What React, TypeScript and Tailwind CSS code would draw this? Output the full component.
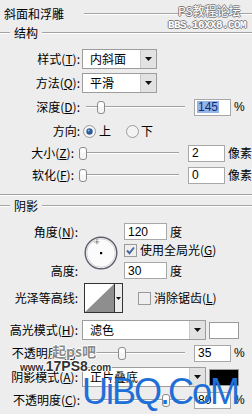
import React from "react";

const K = ({ k }: { k: string }) => <span className="underline underline-offset-[1px]">{k}</span>;

function Etch({ className = "" }: { className?: string }) {
  return <div className={`h-[2px] border-t border-[#a3a3a3] border-b border-b-white ${className}`} />;
}

function Tri() {
  return (
    <svg width="7" height="4" viewBox="0 0 7 4">
      <path d="M0 0 H7 L3.5 4 Z" fill="#111" />
    </svg>
  );
}

function Select({ value, wide }: { value: string; wide?: boolean }) {
  return (
    <div
      className={`flex h-[20px] border border-[#9d9d9d] bg-white ${wide ? "w-[124px]" : "w-[75px]"}`}
    >
      <div className="flex-1 pl-[7px] flex items-center leading-none">{value}</div>
      <div className="w-[16px] bg-[#e2e2e2] border-l border-[#c9c9c9] flex items-center justify-center">
        <Tri />
      </div>
    </div>
  );
}

function Slider({ pos }: { pos: number }) {
  return (
    <div className="relative w-[99px] h-[14px] ml-[6px] shrink-0">
      <div className="absolute left-0 right-0 top-[6px] h-[2px] border-t border-[#a0a0a0] border-b border-b-white" />
      <svg
        className="absolute top-[1px]"
        style={{ left: pos }}
        width="8"
        height="13"
        viewBox="0 0 8 13"
      >
        <rect x="0.5" y="0.5" width="7" height="12" rx="2.5" fill="#f5f5f5" stroke="#8c8c8c" />
        <rect x="1.5" y="1.5" width="5" height="4" rx="1.5" fill="#fff" />
      </svg>
    </div>
  );
}

function Field({ v, sel, w = "w-[37px]" }: { v: string; sel?: boolean; w?: string }) {
  return (
    <div className={`${w} h-[17px] shrink-0 border border-[#a8a8a8] bg-white pl-[3px] flex items-center leading-none font-['Liberation_Sans',sans-serif] text-[12px]`}>
      {sel ? <span className="bg-[#95b4e8] text-[#0c2d76] px-[1px] -ml-[1px]">{v}</span> : v}
    </div>
  );
}

function Radio({ on }: { on?: boolean }) {
  return (
    <svg width="13" height="13" viewBox="0 0 13 13" className="shrink-0">
      <circle cx="6.5" cy="6.5" r="6" fill="#f3f3f3" stroke="#9b9b9b" />
      {on && (
        <>
          <circle cx="6.5" cy="6.5" r="4" fill="#fff" />
          <circle cx="6.5" cy="6.5" r="3.2" fill="#2a5b98" />
          <circle cx="5.7" cy="5.6" r="1.1" fill="#8fb3e0" />
        </>
      )}
    </svg>
  );
}

function Check({ on }: { on?: boolean }) {
  return (
    <svg width="13" height="13" viewBox="0 0 13 13" className="shrink-0">
      <rect x="0.5" y="0.5" width="12" height="12" fill="#efefef" stroke="#9a9a9a" />
      {on && <path d="M3 6.5 L5.5 9.2 L10 3.5" stroke="#4b68a0" strokeWidth="2" fill="none" />}
    </svg>
  );
}

function Dial() {
  return (
    <svg width="34" height="34" viewBox="0 0 34 34">
      <circle cx="17" cy="17" r="15.8" fill="#f2f2f2" stroke="#5d5f6e" strokeWidth="1.4" />
      <circle cx="17" cy="17" r="14.2" fill="#fbfbfb" stroke="#d6d6d6" strokeWidth="1" />
      <rect x="16" y="16" width="2.2" height="2.2" fill="#000" />
      <path d="M13 3.5 V8.5 M10.5 6 H15.5" stroke="#333" strokeWidth="0.8" strokeDasharray="1 0.6" />
    </svg>
  );
}

function Contour() {
  return (
    <div className="flex w-[39px] h-[30px] border border-[#333] bg-white">
      <svg width="29" height="28" viewBox="0 0 29 28" className="shrink-0">
        <rect width="29" height="28" fill="#fff" />
        <path d="M0 28 L29 0 V28 Z" fill="#8e8e8e" />
      </svg>
      <div className="flex-1 border-l border-[#333] bg-[#ececec] flex items-center justify-center">
        <svg width="5" height="3" viewBox="0 0 5 3">
          <path d="M0 0 H5 L2.5 3 Z" fill="#111" />
        </svg>
      </div>
    </div>
  );
}

function Swatch({ black }: { black?: boolean }) {
  return (
    <div
      className={`ml-[3px] w-[30px] h-[17px] border border-[#9a9a9a] ${black ? "bg-black" : "bg-white"}`}
    />
  );
}

export default function App() {
  return (
    <div className="relative w-[252px] h-[414px] overflow-hidden bg-[#ededed] text-[12px] text-black font-['Noto_Sans_CJK_SC','Noto_Sans',sans-serif]">
      {/* title */}
      <div className="flex items-center h-[26px] pl-[4px] pt-[1px]">
        <span className="leading-none">斜面和浮雕</span>
        <Etch className="flex-1 ml-[20px]" />
      </div>
      <div className="flex items-center h-[14px]">
        <Etch className="w-[10px]" />
        <span className="mx-[4px] leading-none">结构</span>
        <Etch className="flex-1" />
      </div>

      <div className="mt-[8px] flex items-center h-[22px]">
        <div className="w-[80px] text-right leading-none">
          样式(<K k="T" />):
        </div>
        <div className="ml-[2px]">
          <Select value="内斜面" />
        </div>
      </div>
      <div className="mt-[2px] flex items-center h-[22px]">
        <div className="w-[80px] text-right leading-none">
          方法(<K k="Q" />):
        </div>
        <div className="ml-[2px]">
          <Select value="平滑" />
        </div>
      </div>
      <div className="mt-[2px] flex items-center h-[22px]">
        <div className="w-[80px] text-right leading-none">
          深度(<K k="D" />):
        </div>
        <Slider pos={11} />
        <div className="ml-[9px]">
          <Field v="145" sel />
        </div>
        <span className="ml-[3px] leading-none font-['Liberation_Sans',sans-serif]">%</span>
      </div>
      <div className="mt-[2px] flex items-center h-[22px]">
        <div className="w-[80px] text-right leading-none">方向:</div>
        <div className="ml-[3px]">
          <Radio on />
        </div>
        <span className="ml-[3px] leading-none">上</span>
        <div className="ml-[15px]">
          <Radio />
        </div>
        <span className="ml-[2px] leading-none">下</span>
      </div>
      <div className="flex items-center h-[22px]">
        <div className="w-[80px] text-right leading-none">
          大小(<K k="Z" />):
        </div>
        <Slider pos={-1} />
        <div className="ml-[9px]">
          <Field v="2" />
        </div>
        <span className="ml-[3px] leading-none whitespace-nowrap">像素</span>
      </div>
      <div className="flex items-center h-[22px]">
        <div className="w-[80px] text-right leading-none">
          软化(<K k="F" />):
        </div>
        <Slider pos={-1} />
        <div className="ml-[9px]">
          <Field v="0" />
        </div>
        <span className="ml-[3px] leading-none whitespace-nowrap">像素</span>
      </div>

      <Etch className="mt-[8px]" />

      {/* shadow */}
      <div className="mt-[3px] flex items-center h-[14px]">
        <Etch className="w-[10px]" />
        <span className="mx-[4px] leading-none">阴影</span>
        <Etch className="flex-1" />
      </div>

      <div className="mt-[10px] flex">
        <div className="w-[78px] shrink-0">
          <div className="h-[17px] flex items-center justify-end leading-none">
            角度(<K k="N" />):
          </div>
          <div className="mt-[22px] h-[17px] flex items-center justify-end leading-none">高度:</div>
        </div>
        <div className="ml-[6px] mt-[13px]">
          <Dial />
        </div>
        <div className="ml-[6px]">
          <div className="flex items-center">
            <Field v="120" w="w-[43px]" />
            <span className="ml-[3px] leading-none">度</span>
          </div>
          <div className="mt-[3px] h-[14px] flex items-center">
            <Check on />
            <span className="ml-[3px] leading-none whitespace-nowrap">
              使用全局光(<K k="G" />)
            </span>
          </div>
          <div className="mt-[5px] flex items-center">
            <Field v="30" w="w-[43px]" />
            <span className="ml-[3px] leading-none">度</span>
          </div>
        </div>
      </div>

      <div className="mt-[4px] flex items-center h-[30px]">
        <div className="w-[78px] text-right leading-none">光泽等高线:</div>
        <div className="ml-[6px]">
          <Contour />
        </div>
        <div className="ml-[15px]">
          <Check />
        </div>
        <span className="ml-[3px] leading-none whitespace-nowrap">
          消除锯齿(<K k="L" />)
        </span>
      </div>

      <div className="mt-[7px] flex items-center h-[20px]">
        <div className="w-[78px] text-right leading-none whitespace-nowrap">
          高光模式(<K k="H" />):
        </div>
        <div className="ml-[4px]">
          <Select value="滤色" wide />
        </div>
        <Swatch />
      </div>
      <div className="mt-[3px] flex items-center h-[20px]">
        <div className="w-[80px] text-right leading-none whitespace-nowrap">
          不透明度(<K k="O" />):
        </div>
        <Slider pos={32} />
        <div className="ml-[9px]">
          <Field v="35" />
        </div>
        <span className="ml-[3px] leading-none font-['Liberation_Sans',sans-serif]">%</span>
      </div>
      <div className="mt-[4px] flex items-center h-[20px]">
        <div className="w-[78px] text-right leading-none whitespace-nowrap">
          阴影模式(<K k="A" />):
        </div>
        <div className="ml-[4px]">
          <Select value="正片叠底" wide />
        </div>
        <Swatch black />
      </div>
      <div className="mt-[3px] flex items-center h-[20px]">
        <div className="w-[80px] text-right leading-none whitespace-nowrap">
          不透明度(<K k="C" />):
        </div>
        <Slider pos={76} />
        <div className="ml-[9px]">
          <Field v="80" />
        </div>
        <span className="ml-[3px] leading-none font-['Liberation_Sans',sans-serif]">%</span>
      </div>

      {/* watermarks */}
      <div className="absolute left-[178px] top-[5px] leading-none text-white [text-shadow:1px_0_#7d7d7d,-1px_0_#7d7d7d,0_1px_#7d7d7d,0_-1px_#7d7d7d]">
        PS教程论坛
      </div>
      <div className="absolute left-[168px] top-[20px] leading-none text-white font-['Liberation_Mono',monospace] font-bold text-[11px] tracking-[-0.6px] [text-shadow:1px_0_#7d7d7d,-1px_0_#7d7d7d,0_1px_#7d7d7d,0_-1px_#7d7d7d]">
        BBS.16XX8.COM
      </div>
      <div className="absolute left-[52px] top-[344px] leading-none text-[14px] font-bold text-[#8a8a8a] [text-shadow:1px_0_#fff,-1px_0_#fff,0_1px_#fff,0_-1px_#fff]">
        起ps吧
      </div>
      <div className="absolute left-[20px] top-[359px] leading-none font-['Liberation_Sans',sans-serif] font-bold text-[#333] whitespace-nowrap [text-shadow:1px_0_#fff,-1px_0_#fff,0_1px_#fff,0_-1px_#fff]">
        <span className="text-[10px]">www.</span>
        <span className="text-[14px]">17PS8</span>
        <span className="text-[10px]">.com</span>
      </div>
      <div className="absolute left-[82px] top-[374px] leading-none text-[36px] tracking-[-2px] text-[#1e6fd6] font-['Liberation_Sans',sans-serif] whitespace-nowrap">
        UiBQ.CoM
      </div>
    </div>
  );
}
